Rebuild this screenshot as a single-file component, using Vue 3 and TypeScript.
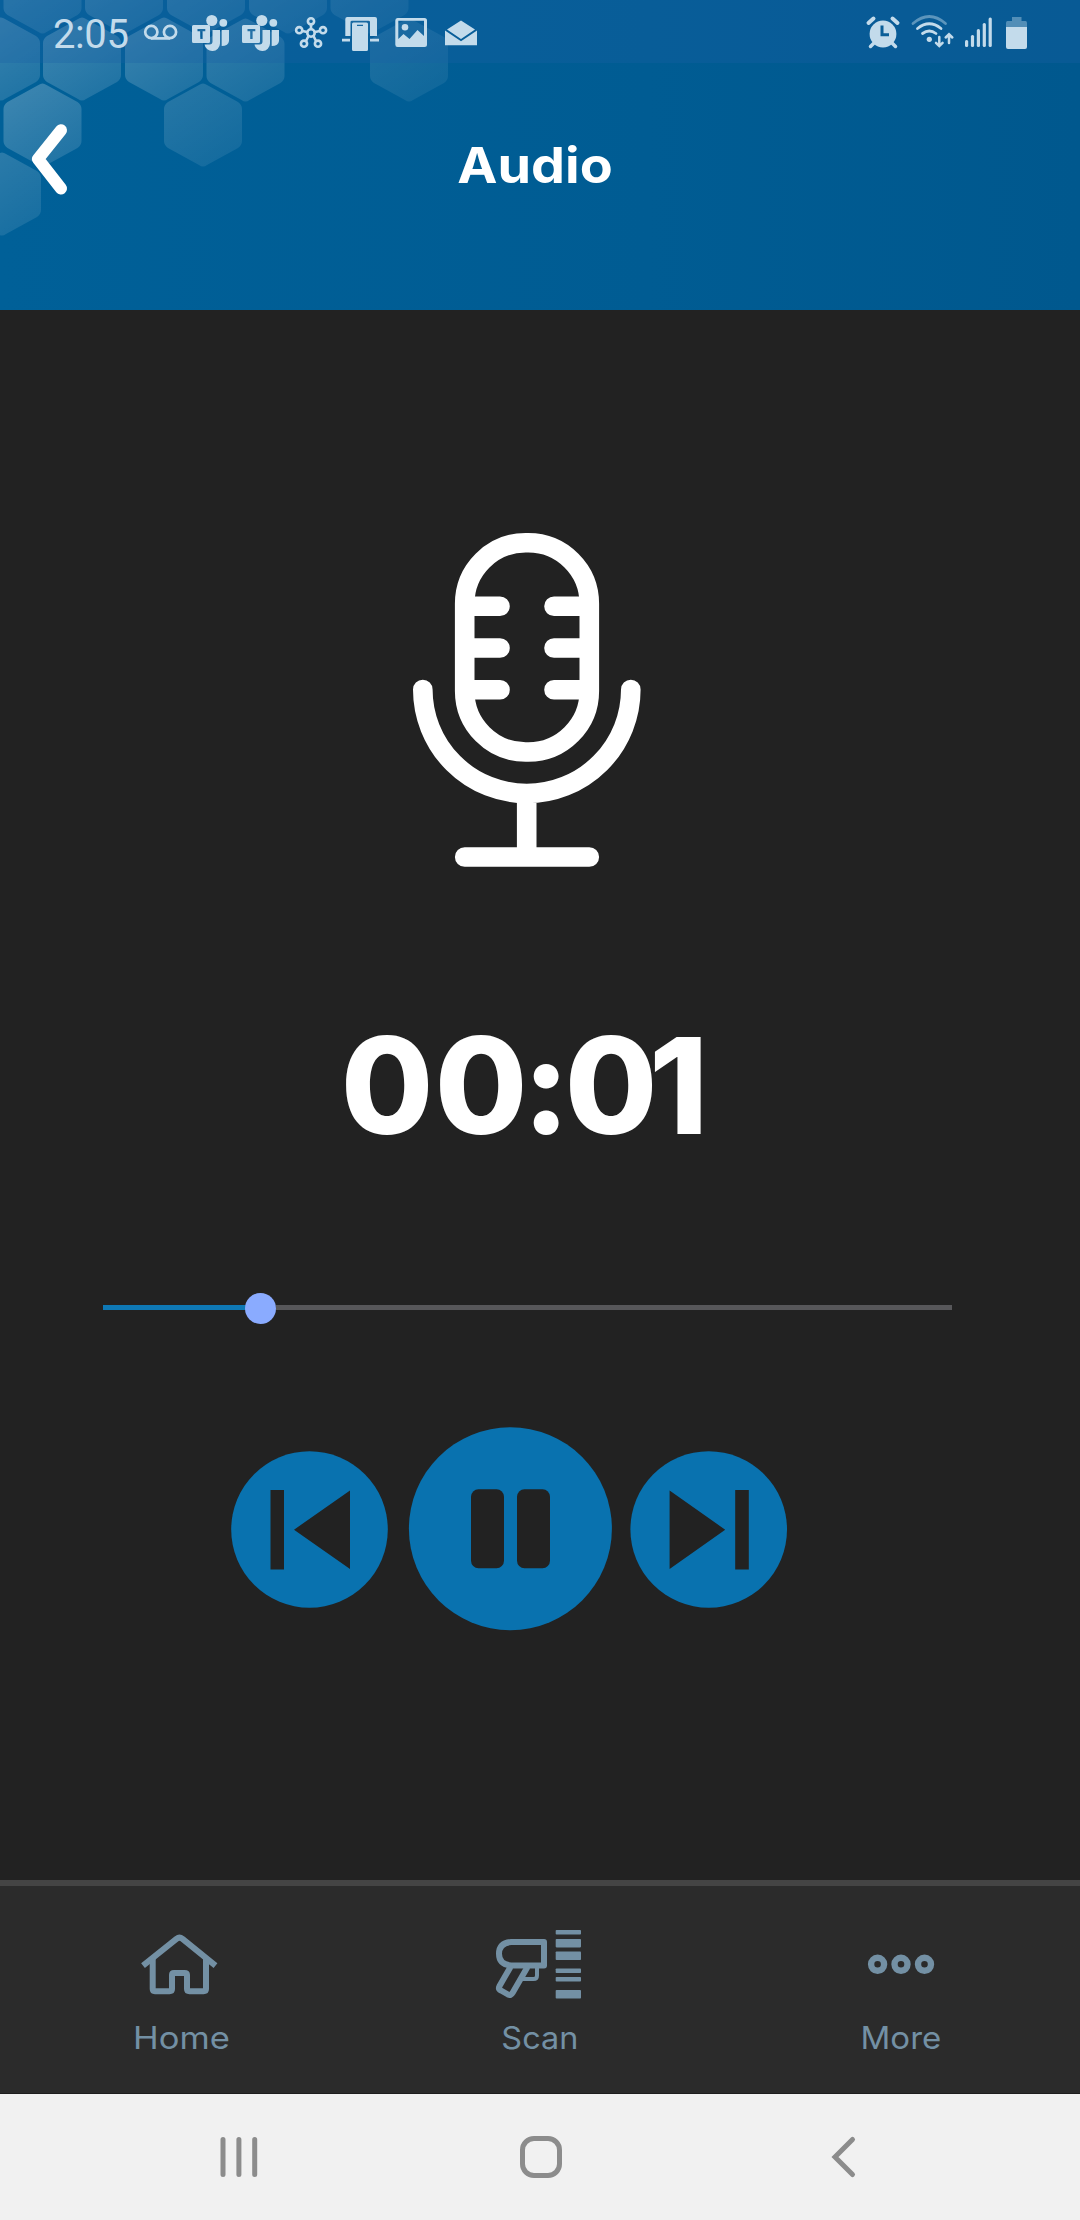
<script setup lang="ts">
import { computed, ref } from 'vue'

interface Cell { x: number; y: number; o: number }

const cells: Cell[] = [
  { x: 42.5, y: -8, o: 0.9 }, { x: 124, y: -8, o: 0.9 }, { x: 206, y: -8, o: 0.85 },
  { x: 288, y: -8, o: 0.75 }, { x: 369.5, y: -8, o: 0.6 },
  { x: 1, y: 59, o: 1 }, { x: 82, y: 59, o: 1 }, { x: 164, y: 59, o: 0.95 },
  { x: 245.5, y: 60, o: 0.8 }, { x: 409, y: 60, o: 0.5 },
  { x: 42.5, y: 125, o: 1 }, { x: 203, y: 125, o: 0.62 }, { x: 2, y: 194, o: 0.75 },
]

const elapsed = ref(1)
const timer = computed(() => {
  const pad = (n: number): string => String(n).padStart(2, '0')
  return `${pad(Math.floor(elapsed.value / 60))}:${pad(elapsed.value % 60)}`
})
const progress = ref(18.5)
const signal = [40, 35, 29, 23, 17.5]
const codeBars = [[1930, 4.6], [1939, 8.4], [1951.5, 8.5], [1968.5, 4.6], [1977, 4.6], [1990, 8.6]]
</script>

<template>
  <div class="screen">
    <header class="header">
      <svg class="pattern" width="1080" height="310" viewBox="0 0 1080 310">
        <defs>
          <linearGradient id="cell" x1="0" y1="0" x2="0.6" y2="1">
            <stop offset="0" stop-color="#fff" stop-opacity="0.25" />
            <stop offset="1" stop-color="#fff" stop-opacity="0.13" />
          </linearGradient>
        </defs>
        <path
          v-for="(c, i) in cells" :key="i" fill="url(#cell)" :opacity="c.o"
          :transform="`translate(${c.x} ${c.y})`"
          d="M-4 -40Q0 -43 4 -40L35 -23Q39 -20 39 -16V16Q39 20 35 23L4 40Q0 43 -4 40L-35 23Q-39 20 -39 16V-16Q-39 -20 -35 -23Z"
        />
      </svg>
      <div class="status">
        <span class="clock">2:05</span>
        <svg width="345" height="63" viewBox="140 0 345 63" fill="#c3dbeb">
          <g fill="none" stroke="#c3dbeb" stroke-width="2.7">
            <circle cx="151.3" cy="32" r="6.1" /><circle cx="170" cy="32" r="6.1" />
            <path d="M151 38.4H170" />
          </g>
          <g v-for="dx in [0, 50]" :key="dx" :transform="`translate(${dx} 0)`">
            <circle cx="211.8" cy="20.5" r="5.6" /><circle cx="223.3" cy="22.8" r="3.9" />
            <path d="M212.5 30H220V43.5A7.8 7.8 0 0 1 204.5 44.5H209.5Q212.500 44.500 212.500 41.500Z" />
            <path d="M221.700 30H229V41Q228.500 46 221.700 46Z" />
            <path fill-rule="evenodd" d="M193.500 25H208.500Q210 25 210 26.500V41.500Q210 43 208.500 43H193.500Q192 43 192 41.500V26.500Q192 25 193.500 25ZM197.500 29V31.200H200.200V39H202.600V31.200H205.300V29Z" />
          </g>
          <g fill="none" stroke="#c3dbeb" stroke-width="2.6">
            <circle cx="311" cy="33" r="3.7" /><circle cx="311" cy="21.300" r="3.100" />
            <circle cx="299.200" cy="30.200" r="3.100" /><circle cx="323" cy="30.200" r="3.100" />
            <circle cx="304" cy="43.700" r="3.100" /><circle cx="318" cy="43.700" r="3.100" />
            <path d="M311 24.500V29M302.500 31L307 32M315 32L319.800 31M308.500 36L306 41M313.500 36L316 41" />
          </g>
          <path d="M345.300 36V19Q345.300 17 347.300 17H375Q377 17 377 19V36H370V22Q370 20.800 368.500 20.800H352Q350.500 20.800 350.500 22V36ZM342 38.800H350V41.500H342ZM370 38.800H379V41.500H370Z" />
          <path fill-rule="evenodd" d="M353.500 22.500H366.500Q368 22.500 368 24V49.500Q368 51 366.500 51H353.500Q352 51 352 49.500V24Q352 22.500 353.500 22.500ZM357 24.800V26H363V24.800Z" />
          <path fill-rule="evenodd" d="M397.500 18H424.500Q427 18 427 20.500V44.500Q427 47 424.500 47H397.500Q395.300 47 395.300 44.500V20.500Q395.300 18 397.500 18ZM398.300 20.800V39L403.500 34L409.500 39L417.500 30L424 36V20.800Z" />
          <circle cx="405" cy="27.300" r="3.300" />
          <path d="M461 20.500L475 29.500L461 39L447 29.500ZM445 30.500L461 41.300L477 30.500V45.300H445Z" />
        </svg>
        <svg class="system" width="180" height="63" viewBox="860 0 180 63" fill="#c3dbeb">
          <circle cx="883" cy="34" r="13.400" />
          <path d="M882 25.500V34.800H889" fill="none" stroke="#0a5e98" stroke-width="3" />
          <path d="M868.500 23L873.500 18.500M897.500 23L892.500 18.500" stroke="#c3dbeb" stroke-width="4" stroke-linecap="round" />
          <path d="M874 43L870.500 46.500M892 43L895.500 46.500" stroke="#c3dbeb" stroke-width="3.500" stroke-linecap="round" />
          <circle cx="929.300" cy="39.300" r="2.600" />
          <g fill="none" stroke="#c3dbeb" stroke-width="2.800" stroke-linecap="round">
            <path d="M922.500 33.500Q929.300 28.500 936 33.500M917.500 28.500Q929.300 19 941 28.500" />
            <path d="M913 23.500Q929.300 9.500 945.500 23.500" opacity=".45" />
            <path d="M939.300 37V45.500M936 42.800L939.300 46L942.600 42.800M949 43V34.500M945.700 37.500L949 34.300L952.300 37.500" stroke-width="2.500" />
          </g>
          <rect v-for="(y, i) in signal" :key="i" :x="965 + i * 5.900" :y="y" width="3.200" :height="47 - y" rx="1.500" />
          <path d="M1012 17H1021.500V21H1025.500Q1027 21 1027 23V27H1006V23Q1006 21 1007.500 21H1012Z" opacity=".4" />
          <path d="M1006 27H1027V47Q1027 49 1025 49H1008Q1006 49 1006 47Z" />
        </svg>
      </div>
      <div class="titlebar">
        <svg class="back" width="40" height="80" viewBox="30 119 40 80" fill="none" stroke="#fff" stroke-width="12" stroke-linecap="round" stroke-linejoin="round">
          <path d="M61 130.300L38 159L61 188.500" />
        </svg>
        <h1>Audio</h1>
      </div>
    </header>

    <main class="player">
      <svg class="mic" width="230" height="336" viewBox="412 532 230 336" fill="none" stroke="#fff" stroke-width="19.600" stroke-linecap="round">
        <rect x="464.700" y="542.700" width="124.600" height="209.300" rx="61" />
        <path d="M465 606.300H500M465 648H500M465 689.700H500M554 606.300H589M554 648H589M554 689.700H589" />
        <path d="M422.800 689.500A104 104 0 0 0 630.800 689.500M526.700 794V856M464.700 857H589.300" />
      </svg>
      <svg class="time" width="400" height="190" viewBox="334 990 400 190">
        <text x="387 481 546 611 678.500" y="1134" text-anchor="middle">{{ timer }}</text>
      </svg>
      <div class="slider">
        <div class="played" :style="{ width: progress + '%' }"></div>
        <div class="thumb"></div>
        <div class="rest"></div>
      </div>
      <div class="controls">
        <svg width="157" height="157" viewBox="231 1451 157 157">
          <circle cx="309.500" cy="1529.500" r="78.300" fill="#0972af" />
          <path d="M270.500 1490H284V1569.500H270.500ZM294 1529.700L350 1490.500V1569Z" fill="#222" />
        </svg>
        <svg class="pause" width="204" height="204" viewBox="408 1427 204 204">
          <circle cx="510.400" cy="1528.700" r="101.500" fill="#0972af" />
          <rect x="471" y="1489.300" width="33" height="79" rx="7.500" fill="#222" />
          <rect x="517" y="1489.300" width="33" height="79" rx="7.500" fill="#222" />
        </svg>
        <svg width="158" height="157" viewBox="630 1451 158 157">
          <circle cx="708.700" cy="1529.500" r="78.300" fill="#0972af" />
          <path d="M735.200 1490H748.800V1569.500H735.200ZM725.200 1529.700L669.600 1490.500V1569Z" fill="#222" />
        </svg>
      </div>
    </main>

    <nav class="tabs">
      <a class="tab">
        <svg width="90" height="80" viewBox="135 1925 90 80" fill="none" stroke="#7390a4" stroke-width="6" stroke-linejoin="round">
          <path d="M143 1965.700L176.500 1938.800Q179.500 1936.500 182.500 1938.800L215.500 1965.700" />
          <path d="M152.700 1959V1989Q152.700 1991.200 155 1991.200H169.500Q172 1991.200 172 1989V1975Q172 1973 174 1973H184.500Q187 1973 187 1975V1989Q187 1991.200 189.500 1991.200H203.500Q206 1991.200 206 1989V1959" />
        </svg>
        <span class="home">Home</span>
      </a>
      <a class="tab">
        <svg width="90" height="80" viewBox="495 1925 90 80" fill="none" stroke="#7390a4" stroke-width="6" stroke-linejoin="round">
          <path d="M544 1942H511Q499 1943 499 1953.800Q499 1964.500 511 1965.500H544Z" />
          <path d="M510.500 1967L499.500 1986Q498 1989 501 1990.500L508 1994.500Q511 1996 512.500 1993L527.500 1967" />
          <path d="M537 1967V1975.500Q537 1979 533.500 1979H523" stroke-width="4" />
          <rect v-for="b in codeBars" :key="b[0]" x="555.700" :y="b[0]" width="25.300" :height="b[1]" rx="0.800" fill="#7390a4" stroke="none" />
        </svg>
        <span class="scan">Scan</span>
      </a>
      <a class="tab">
        <svg width="90" height="80" viewBox="855 1925 90 80" fill="none" stroke="#7390a4" stroke-width="6.400">
          <circle v-for="cx in [877.600, 901, 924.500]" :key="cx" :cx="cx" cy="1964.300" r="6.500" />
        </svg>
        <span class="more">More</span>
      </a>
    </nav>

    <footer class="sysnav">
      <svg width="60" height="60" viewBox="209 2127 60 60" stroke="#8c8c8c" stroke-width="5" stroke-linecap="round">
        <path d="M223 2139.500V2174.500M238.900 2139.500V2174.500M254.700 2139.500V2174.500" />
      </svg>
      <svg width="60" height="60" viewBox="511 2127 60 60" fill="none" stroke="#8c8c8c" stroke-width="5">
        <rect x="522.500" y="2138.500" width="37" height="37" rx="11.500" />
      </svg>
      <svg width="60" height="60" viewBox="813 2127 60 60" fill="none" stroke="#8c8c8c" stroke-width="5" stroke-linecap="round">
        <path d="M852.500 2139.500L835 2157L852.500 2174.500" />
      </svg>
    </footer>
  </div>
</template>

<style>
body { margin: 0; background: #222; }
</style>

<style scoped>
.screen {
  width: 1080px;
  height: 2220px;
  display: flex;
  flex-direction: column;
  overflow: hidden;
  background: #222;
  font-family: Inter, "Liberation Sans", sans-serif;
}
svg { display: block; flex: none; }
.header {
  position: relative;
  height: 310px;
  flex: none;
  background: linear-gradient(90deg, #006098, #005c93 60%, #00588e);
}
.pattern { position: absolute; left: 0; top: 0; }
.status {
  position: relative;
  display: flex;
  height: 63px;
  background: rgba(25, 95, 165, 0.3);
}
.clock {
  width: 87px;
  padding-left: 53px;
  font: 400 40px/69px Roboto, sans-serif;
  letter-spacing: -0.4px;
  color: #c3dbeb;
}
.system { margin-left: auto; margin-right: 40px; }
.titlebar {
  position: relative;
  display: flex;
  align-items: center;
  height: 80px;
  margin-top: 56px;
}
.back { margin-left: 30px; }
h1 {
  flex: 1;
  margin: 0 80px 0 0;
  padding-top: 13px;
  text-align: center;
  color: #fff;
  font-size: 49px;
  line-height: 60px;
  font-weight: 700;
  transform: scaleX(1.1);
}
.player {
  flex: none;
  height: 1570px;
  display: flex;
  flex-direction: column;
}
.mic { margin: 222px 0 0 412px; }
.time { margin: 122px 0 0 334px; }
.time text { font-size: 134px; font-weight: 800; fill: #fff; }
.slider {
  display: flex;
  align-items: center;
  width: 849px;
  height: 32px;
  margin: 112px 0 0 103px;
}
.played { height: 5px; background: #0e78b5; margin-right: -15px; margin-top: -1px; }
.thumb { width: 31px; height: 31px; border-radius: 50%; background: #8aabff; z-index: 1; }
.rest { flex: 1; height: 5px; margin-top: -1px; background: #57575a; }
.controls {
  display: flex;
  align-items: center;
  margin: 103px 0 0 231px;
}
.pause { margin: 0 18px 0 20px; }
.tabs {
  flex: none;
  box-sizing: border-box;
  height: 214px;
  display: flex;
  border-top: 6px solid #444;
  border-bottom: 1px solid #1e1e1e;
  background: #2b2b2b;
}
.tab {
  flex: 1;
  display: flex;
  flex-direction: column;
  align-items: center;
  padding-top: 39px;
  font-size: 31px;
  line-height: 40px;
  color: #7390a4;
}
.tab span { margin-top: 13px; }
.home { transform: translateX(1px) scaleX(1.115); }
.scan { transform: scaleX(1.045); }
.more { transform: translateX(1px) scaleX(1.065); }
.sysnav {
  flex: 1;
  display: flex;
  align-items: center;
  padding-left: 209px;
  gap: 242px;
  background: #f1f1f1;
}
</style>
